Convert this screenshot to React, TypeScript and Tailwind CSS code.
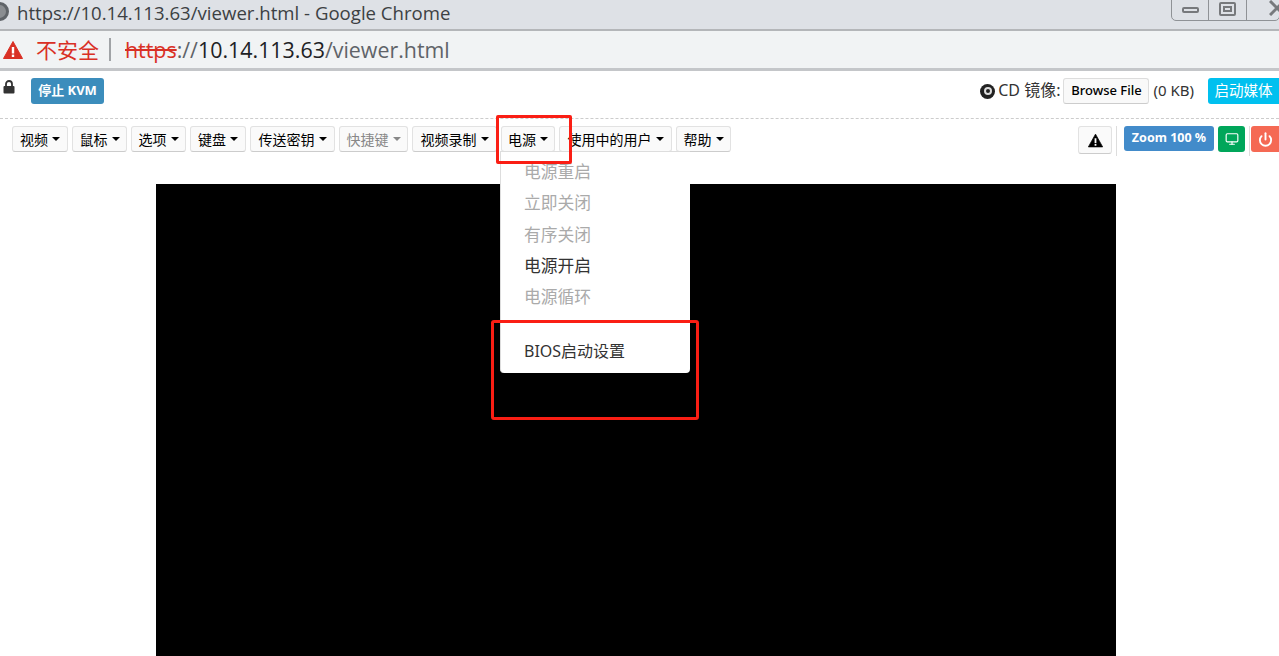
import { Monitor, Power } from "lucide-react";

const font = "font-['Noto_Sans','Noto_Sans_CJK_SC',sans-serif]";

const menus = [
  { label: "视频", width: "w-[56px]" },
  { label: "鼠标", width: "w-[55px]" },
  { label: "选项", width: "w-[55px]" },
  { label: "键盘", width: "w-[56px]" },
  { label: "传送密钥", width: "w-[85px]" },
  { label: "快捷键", width: "w-[69px]", disabled: true },
  { label: "视频录制", width: "w-[85px]" },
  { label: "电源", width: "w-[54px]" },
  { label: "使用中的用户", width: "w-[113px]" },
  { label: "帮助", width: "w-[55px]" },
];

const powerItems = [
  { label: "电源重启", disabled: true },
  { label: "立即关闭", disabled: true },
  { label: "有序关闭", disabled: true },
  { label: "电源开启" },
  { label: "电源循环", disabled: true },
];

function Caret({ muted }: { muted?: boolean }) {
  return (
    <span
      className={`ml-[4px] inline-block h-0 w-0 border-x-[4.5px] border-t-[4.5px] border-x-transparent ${
        muted ? "border-t-[#888]" : "border-t-black"
      }`}
    />
  );
}

// solid triangle with a knocked-out exclamation mark
function AlertIcon({ color, size }: { color: string; size: number }) {
  return (
    <svg width={size} height={size} viewBox="0 0 20 20">
      <path d="M10 1.5 L19.5 18.5 L0.5 18.5 Z" fill={color} stroke={color} strokeLinejoin="round" />
      <rect x="8.8" y="7" width="2.4" height="6.5" fill="#fff" />
      <rect x="8.8" y="14.6" width="2.4" height="2.4" fill="#fff" />
    </svg>
  );
}

function LockIcon() {
  return (
    <svg width="12" height="14" viewBox="0 0 12 14" className="mt-[2px] ml-[3px]">
      <path d="M3 6.5 V4 a3 3 0 0 1 6 0 V6.5" fill="none" stroke="#333" strokeWidth="1.8" />
      <rect x="0.5" y="6" width="11" height="7.5" rx="1" fill="#333" />
    </svg>
  );
}

function WindowControls() {
  return (
    <div className="mt-[-4px] mr-[-1px] flex h-[25px] w-[109px] rounded-b-[5px] border border-[#8f9296]">
      <div className="flex w-[37px] items-center justify-center border-r border-[#8f9296] pt-[3px]">
        <span className="h-[6px] w-[17px] rounded-[2px] border-2 border-[#77797c]" />
      </div>
      <div className="flex w-[38px] items-center justify-center border-r border-[#8f9296]">
        <span className="flex h-[14px] w-[17px] items-center justify-center rounded-[2px] border-2 border-[#77797c]">
          <span className="h-[6px] w-[9px] border-2 border-[#77797c]" />
        </span>
      </div>
      <div className="flex-1 overflow-hidden pl-[22px] pt-[3px]">
        <svg width="16" height="16" viewBox="0 0 16 16" className="shrink-0">
          <path d="M1 1 L15 15 M15 1 L1 15" stroke="#77797c" strokeWidth="3" fill="none" />
        </svg>
      </div>
    </div>
  );
}

function ChromeBars() {
  return (
    <>
      <div className="flex h-[31px] items-start justify-between border-b-2 border-[#b4b6b9] bg-[#dee1e6]">
        <div className="flex items-start">
          <span className="ml-[-10px] mt-[2px] h-[19px] w-[19px] rounded-full border-[3px] border-[#5f6368] bg-[#8a8d91]" />
          <span className="ml-[8px] font-['Open_Sans','Noto_Sans',sans-serif] text-[18.6px] leading-[26px] text-[#3c4043]">
            https://10.14.113.63/viewer.html - Google Chrome
          </span>
        </div>
        <WindowControls />
      </div>
      <div className="flex h-[40px] items-center border-b-[3px] border-[#c4c6c9] bg-[#f1f3f4] pl-[3px]">
        <AlertIcon color="#d93025" size={20} />
        <span className="ml-[13px] font-['Noto_Sans_CJK_SC',sans-serif] text-[21px] text-[#d93025]">不安全</span>
        <span className="ml-[10px] mr-[14px] h-[23px] w-[2px] bg-[#a0a3a6]" />
        <span className="pt-[2px] font-['Open_Sans','Noto_Sans',sans-serif] text-[21.4px] text-[#5f6368]">
          <span className="text-[#d93025] line-through">https</span>://
          <span className="text-[#202124]">10.14.113.63</span>/viewer.html
        </span>
      </div>
    </>
  );
}

function TopRow() {
  return (
    <div className="flex h-[48px] items-start justify-between border-b border-dashed border-[#ccc] pt-[7px]">
      <div className="flex items-start">
        <LockIcon />
        <button className="ml-[16px] h-[26px] w-[73px] rounded-[3px] bg-[#3c8dbc] text-[13px] font-bold text-white">
          停止 KVM
        </button>
      </div>
      <div className="flex items-center">
        <span className="flex h-[15px] w-[15px] items-center justify-center rounded-full bg-[#222]">
          <span className="h-[8px] w-[8px] rounded-full border-2 border-[#ddd]" />
        </span>
        <span className="ml-[3px] pb-[2px] text-[16px] text-[#333]">CD 镜像:</span>
        <button className="ml-[3px] h-[26px] w-[86px] rounded-[3px] border border-[#ddd] border-b-[#ccc] bg-[#f9f9f9] text-[13px] font-medium text-black">
          Browse File
        </button>
        <span className="ml-[4px] pb-[2px] text-[15px] text-[#333]">(0 KB)</span>
        <button className="ml-[14px] h-[26px] w-[71px] rounded-l-[3px] bg-[#00c0ef] text-[14.5px] text-white">
          启动媒体
        </button>
      </div>
    </div>
  );
}

function Toolbar() {
  return (
    <div className="flex h-[34px] items-start justify-between pt-[7px]">
      <div className="ml-[12px] flex gap-[4px]">
        {menus.map((menu) => (
          <button
            key={menu.label}
            className={`flex h-[26px] items-center justify-center whitespace-nowrap rounded-[3px] border border-[#e2e2e2] border-b-[#ccc] bg-[#fafafa] text-[14px] ${menu.width} ${
              menu.disabled ? "text-[#888]" : "text-black"
            }`}
          >
            {menu.label}
            <Caret muted={menu.disabled} />
          </button>
        ))}
      </div>
      <div className="flex items-start">
        <button className="flex h-[28px] w-[34px] items-center justify-center rounded-[3px] border border-[#e2e2e2] border-b-[#ccc] bg-[#fafafa]">
          <AlertIcon color="#000" size={15} />
        </button>
        <span className="ml-[4px] mr-[7px] h-[30px] w-px bg-[#ddd]" />
        <button className="h-[25px] w-[90px] rounded-[3px] bg-[#428bca] text-[12.5px] font-bold text-white">
          Zoom 100 %
        </button>
        <button className="ml-[4px] flex h-[26px] w-[27px] items-center justify-center rounded-[3px] bg-[#00a65a]">
          <Monitor size={14} stroke="#fff" strokeWidth={2} />
        </button>
        <span className="ml-[4px] mr-px h-[30px] w-px bg-[#ddd]" />
        <button className="flex h-[26px] w-[28px] items-center justify-center rounded-l-[3px] bg-[#f56954]">
          <Power size={15} stroke="#fff" strokeWidth={3} />
        </button>
      </div>
    </div>
  );
}

function PowerMenu() {
  return (
    <div className="absolute left-[500px] top-[151px] z-10 h-[222px] w-[190px] rounded-b-[4px] border-t border-l border-[#ddd] bg-white pt-[4px] text-[16.8px] text-[#333]">
      {powerItems.map((item) => (
        <div
          key={item.label}
          className={`flex h-[31.3px] items-center pl-[23px] ${item.disabled ? "text-[#aaa]" : "text-[#333]"}`}
        >
          {item.label}
        </div>
      ))}
      <div className="mt-[23px] flex h-[32px] items-center pl-[23px] text-[16px]">BIOS启动设置</div>
    </div>
  );
}

export default function App() {
  return (
    <div className={`relative h-[656px] w-[1279px] overflow-hidden bg-white ${font}`}>
      <ChromeBars />
      <TopRow />
      <Toolbar />
      <div className="mx-[156px] mt-[31px] h-[472px] w-[960px] bg-black" />
      <PowerMenu />
      {/* Annotation boxes drawn over the screenshot */}
      <div className="absolute left-[496px] top-[115px] z-20 h-[49px] w-[76px] rounded-[2px] border-[3px] border-[#fa1e14]" />
      <div className="absolute left-[491px] top-[320px] z-20 h-[100px] w-[208px] rounded-[3px] border-[3px] border-[#fa1e14]" />
    </div>
  );
}
